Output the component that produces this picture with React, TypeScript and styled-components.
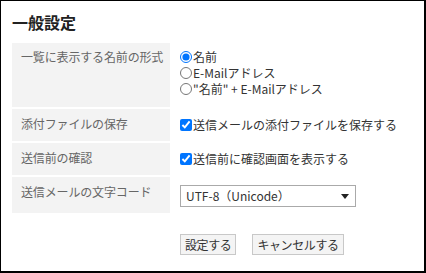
import React from "react";
import styled, { createGlobalStyle } from "styled-components";

const Global = createGlobalStyle`
  html, body { margin: 0; padding: 0; background: #fff; }
  * { box-sizing: border-box; }
`;

const Frame = styled.div`
  width: 426px;
  height: 273px;
  border-style: solid;
  border-color: #000;
  border-width: 1px 2px 2px 1px;
  padding-left: 11px;
  font-family: "Noto Sans CJK JP", sans-serif;
  color: #333;
  background: #fff;
`;

const Title = styled.h1`
  margin: 0;
  padding-top: 11px;
  font-size: 16px;
  line-height: 20px;
  font-weight: 700;
  color: #222;
`;

const Grid = styled.div`
  margin-top: 11px;
  display: grid;
  grid-template-columns: 158px 1fr;
  row-gap: 2px;
  font-size: 12px;
  line-height: 16px;
`;

const Label = styled.div<{ $pt?: number }>`
  background: #f3f3f3;
  color: #666;
  white-space: nowrap;
  letter-spacing: -0.15px;
  padding: ${(p) => p.$pt ?? 7}px 0 0 9px;
`;

const Value = styled.div<{ $pt?: number; $pb?: number }>`
  padding: ${(p) => p.$pt ?? 8}px 10px ${(p) => p.$pb ?? 8}px 10px;
  display: flex;
  flex-direction: column;
`;

const Option = styled.label`
  display: flex;
  align-items: center;
  height: 16px;
  white-space: nowrap;
  color: #333;
`;

const Radio = styled.input.attrs({ type: "radio" })`
  margin: 0 1px 0 0;
  width: 12px;
  height: 12px;
`;

const Check = styled.input.attrs({ type: "checkbox" })`
  margin: 0 1px 0 0;
  width: 12px;
  height: 12px;
`;

const SelectBox = styled.div`
  width: 176px;
  height: 22px;
  border: 1px solid #aaa;
  display: flex;
  align-items: center;
  justify-content: space-between;
  padding: 0 6px 0 5px;
  color: #333;
  background: #fff;
`;

const Buttons = styled.div`
  display: flex;
  gap: 16px;
  margin: 21px 0 0 168px;
`;

const Button = styled.button`
  height: 21px;
  padding: 0 4px;
  border: 1px solid #c8c8c8;
  background: #f4f4f4;
  font-family: "Noto Sans CJK JP", sans-serif;
  font-size: 12px;
  letter-spacing: -0.4px;
  color: #333;
  line-height: 19px;
`;

export default function App() {
  return (
    <>
      <Global />
      <Frame>
        <Title>一般設定</Title>
        <Grid>
          <Label $pt={6}>一覧に表示する名前の形式</Label>
          <Value $pt={6} $pb={10}>
            <Option>
              <Radio name="fmt" defaultChecked />
              名前
            </Option>
            <Option>
              <Radio name="fmt" />
              E-Mailアドレス
            </Option>
            <Option>
              <Radio name="fmt" />
              "名前" + E-Mailアドレス
            </Option>
          </Value>

          <Label>添付ファイルの保存</Label>
          <Value>
            <Option>
              <Check defaultChecked />
              送信メールの添付ファイルを保存する
            </Option>
          </Value>

          <Label>送信前の確認</Label>
          <Value>
            <Option>
              <Check defaultChecked />
              送信前に確認画面を表示する
            </Option>
          </Value>

          <Label>送信メールの文字コード</Label>
          <Value $pt={8} $pb={6}>
            <SelectBox>
              <span>UTF-8（Unicode）</span>
              <svg width="8" height="5" viewBox="0 0 8 5">
                <path d="M0 0 H8 L4 5 Z" fill="#222" />
              </svg>
            </SelectBox>
          </Value>
        </Grid>
        <Buttons>
          <Button>設定する</Button>
          <Button>キャンセルする</Button>
        </Buttons>
      </Frame>
    </>
  );
}
